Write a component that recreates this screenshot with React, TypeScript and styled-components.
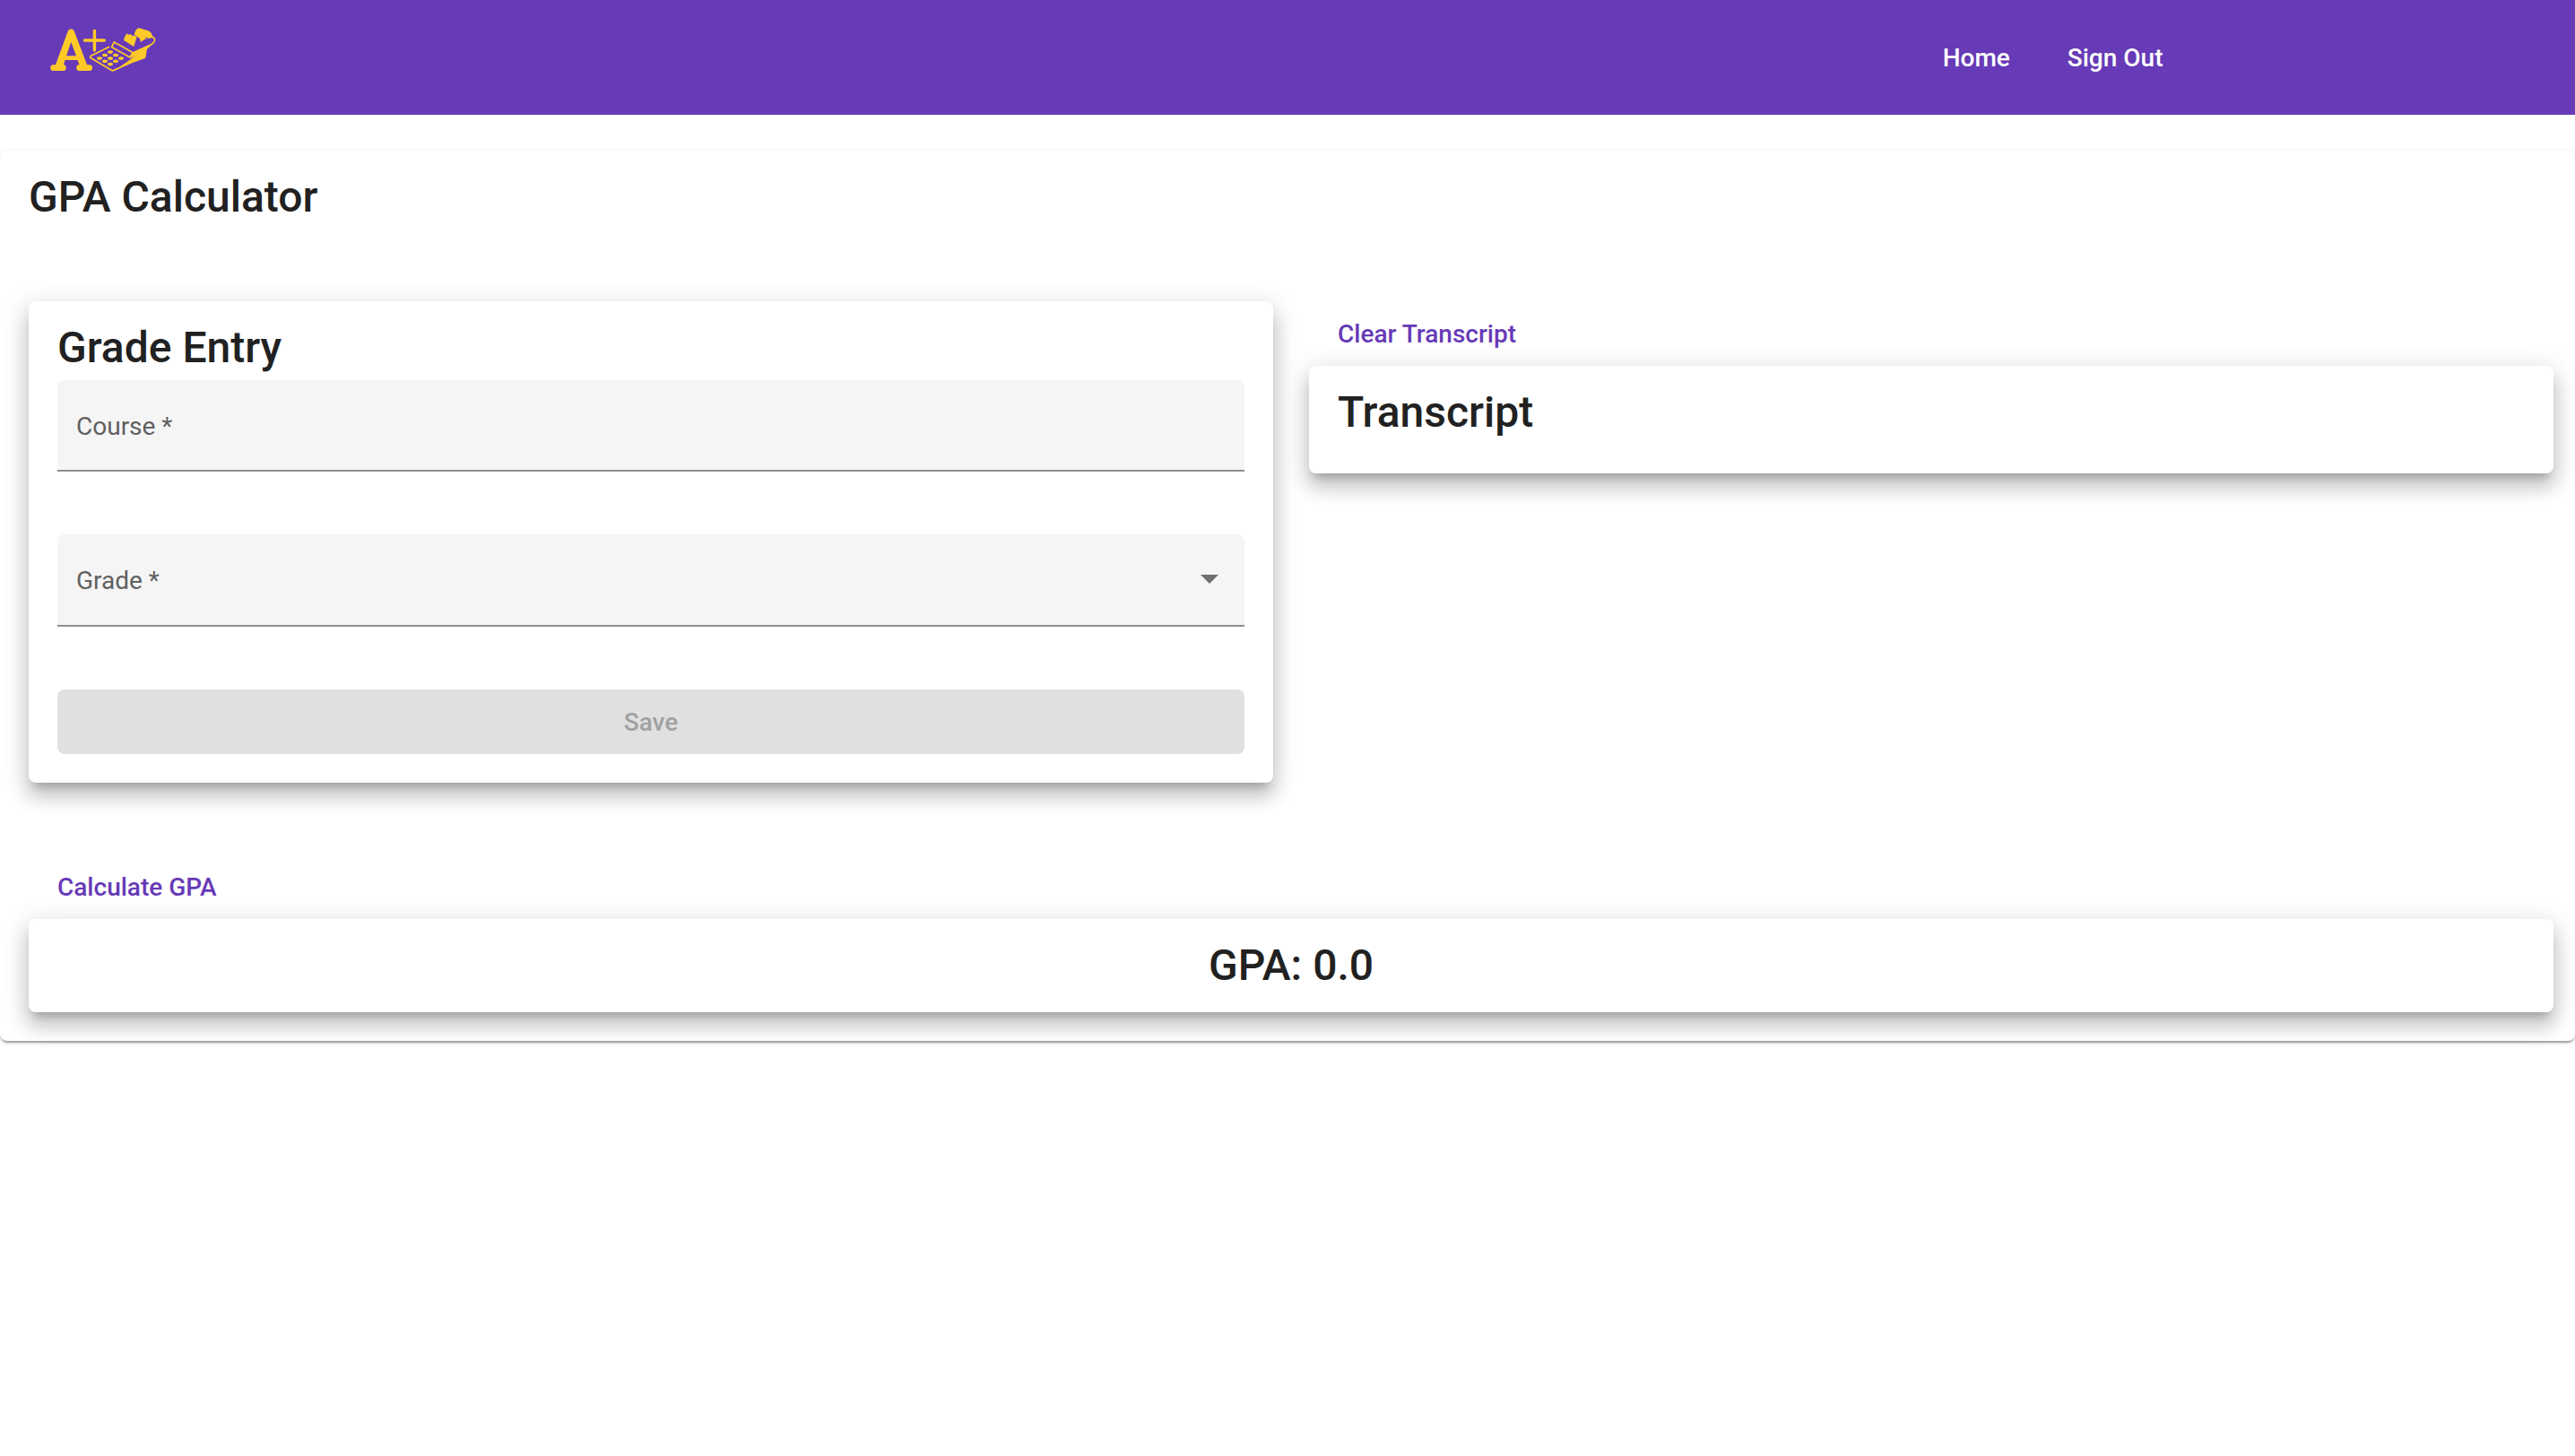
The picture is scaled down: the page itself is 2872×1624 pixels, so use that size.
import React, { useState } from "react";
import styled, { createGlobalStyle } from "styled-components";

const GlobalStyle = createGlobalStyle`
  *, *::before, *::after { box-sizing: border-box; }
  body {
    display: flow-root;
    min-height: 100vh;
    margin: 0;
    background: #fff;
    color: #212121;
    font-family: Roboto, "Liberation Sans", sans-serif;
    font-size: 28px;
    line-height: 40px;
  }
`;

const Header = styled.header`
  display: flex;
  align-items: center;
  justify-content: space-between;
  height: 128px;
  padding: 0 16% 0 56px;
  background: #673ab7;
`;

const LogoLink = styled.a`
  display: flex;
  padding-bottom: 16px;
`;

const Nav = styled.nav`
  display: flex;
  gap: 64px;
  padding-top: 2px;
`;

const NavLink = styled.a`
  color: #fff;
  font-weight: 500;
  text-decoration: none;
`;

const Card = styled.section<{ $bottom?: number }>`
  padding: 20px 32px ${(p) => p.$bottom ?? 20}px;
  border-radius: 8px;
  background: #fff;
  box-shadow:
    0 10px 10px -6px rgba(0, 0, 0, 0.2),
    0 16px 20px 2px rgba(0, 0, 0, 0.14),
    0 6px 28px 4px rgba(0, 0, 0, 0.12);
`;

const Page = styled.main`
  position: relative;
  margin: 40px 0;
  padding: 20px 24px 32px 32px;
  border-radius: 8px;
  background: #fff;
  box-shadow:
    0 4px 2px -2px rgba(0, 0, 0, 0.2),
    0 2px 2px 0 rgba(0, 0, 0, 0.14),
    0 2px 6px 0 rgba(0, 0, 0, 0.12);
`;

const title = `
  margin: 0;
  font-size: 48px;
  font-weight: 500;
  line-height: 64px;
`;

const PageTitle = styled.h1`
  ${title}
`;

const CardTitle = styled.h2<{ $centered?: boolean }>`
  ${title}
  text-align: ${(p) => (p.$centered ? "center" : "left")};
`;

const Columns = styled.div`
  display: grid;
  grid-template-columns: 1fr 1fr;
  align-items: start;
  gap: 40px;
  margin: 84px 0 80px;
`;

const Form = styled.form`
  display: flex;
  flex-direction: column;
  gap: 70px;
  margin-top: 4px;
`;

const Field = styled.div`
  position: relative;
  color: #606060;
`;

const Label = styled.label`
  position: absolute;
  top: 32px;
  left: 21px;
  pointer-events: none;
`;

const control = `
  display: block;
  width: 100%;
  padding: 36px 20px 8px;
  border: 0;
  border-bottom: 2px solid #8e8e8e;
  border-radius: 8px 8px 0 0;
  outline: 0;
  background: #f5f5f5;
  color: #212121;
  font: inherit;
`;

const Input = styled.input`
  ${control}
  height: 102px;
`;

const Select = styled.select`
  ${control}
  height: 103px;
  appearance: none;
`;

const Arrow = styled.svg`
  position: absolute;
  top: 45px;
  right: 29px;
  width: 20px;
  height: 10px;
  fill: #707070;
  pointer-events: none;
`;

const Button = styled.button`
  display: block;
  height: 72px;
  padding: 2px 32px 0;
  border: 0;
  border-radius: 8px;
  background: transparent;
  color: #673ab7;
  font: inherit;
  font-weight: 500;
  cursor: pointer;
`;

const SaveButton = styled(Button)`
  &:disabled {
    background: #e0e0e0;
    color: #a1a1a1;
    cursor: default;
  }
`;

const keys = [
  [67, 28], [73, 31.5], [79, 35],
  [61, 31.5], [67, 35], [73, 38.3],
  [55, 35], [61, 38.3], [67, 41.6],
];

function Logo() {
  return (
    <svg width="120" height="52" viewBox="0 0 120 52" fill="#ffca28" aria-hidden="true">
      <path
        fillRule="evenodd"
        d="M20 4Q23.300 0.500 26.500 4L41 42.300H44Q47 42.300 47 45.600Q47 49 44 49H32Q29.300 49 29.300 45.600Q29.300 42.300 32 42.300H32.500L30.500 37H16.500L15 42.300Q17.700 42.300 17.700 45.600Q17.700 49 15 49H3Q0.300 49 0.300 45.600Q0.300 42.300 3 42.300H6ZM23.300 17L18 32.300H29Z"
      />
      <path d="M38.500 15H60.300M49.400 4.200V26" fill="none" stroke="#ffca28" strokeWidth="3.400" strokeLinecap="round" />
      <g fill="none" stroke="#ffca28" strokeWidth="1.700" strokeLinejoin="round" strokeLinecap="round">
        <path d="M65.300 22.500L45 32.500Q44 33.500 45 34.500L69.500 49L76 46" />
        <path d="M71.300 17L92 28.500L89 34L68.500 22.500Z" />
        <path d="M92 29L113 19.500Q118 16 116 12.500L111 9.500" />
      </g>
      <path d="M69.700 49.800L104 26.500L107.500 24.500V27.500L106.500 34Q106 35 104.500 35.500L92 40Z" />
      <path d="M90 35.500L107.500 25.500L113 20L106 22.500L92 29.500Z" />
      <path d="M85.700 7.300L87.500 8.800L89.700 8L91.500 10L94 9.500L96.500 11.500L93.300 22L82 15Q83 10 85.700 7.300Z" />
      <path d="M94 7Q95.500 2 99 1.300L110 4.500Q114.500 7.500 114 12L105.700 13.800L100.800 17L100 13L94 9Z" />
      <path d="M106 11.800L112 14.500M107.500 14.800L111 16" fill="none" stroke="#673ab7" strokeWidth="1" />
      {keys.map(([cx, cy]) => (
        <ellipse key={`${cx}-${cy}`} cx={cx} cy={cy} rx="3" ry="1.8" />
      ))}
    </svg>
  );
}

export default function App() {
  const [course, setCourse] = useState("");
  const [grade, setGrade] = useState("");

  return (
    <>
      <GlobalStyle />
      <Header>
        <LogoLink href="#" aria-label="Home page">
          <Logo />
        </LogoLink>
        <Nav>
          <NavLink href="#">Home</NavLink>
          <NavLink href="#">Sign Out</NavLink>
        </Nav>
      </Header>
      <Page>
        <PageTitle>GPA Calculator</PageTitle>
        <Columns>
          <Card $bottom={32}>
            <CardTitle>Grade Entry</CardTitle>
            <Form onSubmit={(e) => e.preventDefault()}>
              <Field>
                <Input id="course" required value={course} onChange={(e) => setCourse(e.target.value)} />
                {!course && <Label htmlFor="course">Course *</Label>}
              </Field>
              <Field>
                <Select id="grade" required value={grade} onChange={(e) => setGrade(e.target.value)}>
                  <option value="" />
                </Select>
                {!grade && <Label htmlFor="grade">Grade *</Label>}
                <Arrow viewBox="0 0 20 10" aria-hidden="true">
                  <path d="M0 0h20L10 10z" />
                </Arrow>
              </Field>
              <SaveButton type="submit" disabled={!course || !grade}>
                Save
              </SaveButton>
            </Form>
          </Card>
          <div>
            <Button type="button">Clear Transcript</Button>
            <Card $bottom={36}>
              <CardTitle>Transcript</CardTitle>
            </Card>
          </div>
        </Columns>
        <Button type="button">Calculate GPA</Button>
        <Card>
          <CardTitle $centered>GPA: 0.0</CardTitle>
        </Card>
      </Page>
    </>
  );
}
